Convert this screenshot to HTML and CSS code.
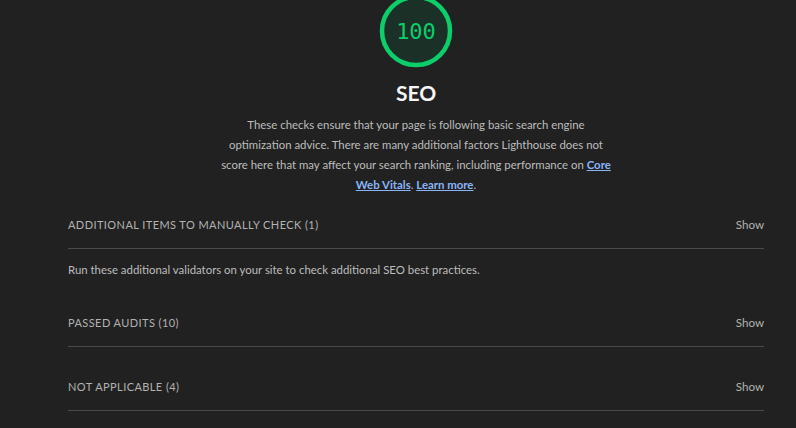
FILE: index.html
```html
<!DOCTYPE html>
<html>
<head>
<meta charset="utf-8">
<link rel="stylesheet" href="styles.css">
</head>
<body>
<div class="category">
  <div class="gauge-wrap">
    <svg class="gauge" width="80" height="80" viewBox="0 0 80 80">
      <circle cx="40" cy="40" r="34" fill="#1b3027" stroke="#0cce6b" stroke-width="4.5"/>
    </svg>
    <span class="gauge-score">100</span>
  </div>
  <div class="title">SEO</div>
  <p class="desc">These checks ensure that your page is following basic search engine optimization advice. There are many additional factors Lighthouse does not score here that may affect your search ranking, including performance on <a href="#">Core Web Vitals</a>. <a href="#">Learn more</a>.</p>

  <div class="group">
    <div class="group-header"><span class="group-title">Additional items to manually check (1)</span><span class="show">Show</span></div>
    <p class="group-desc">Run these additional validators on your site to check additional SEO best practices.</p>
  </div>
  <div class="group">
    <div class="group-header"><span class="group-title">Passed audits (10)</span><span class="show">Show</span></div>
  </div>
  <div class="group">
    <div class="group-header"><span class="group-title">Not applicable (4)</span><span class="show">Show</span></div>
  </div>
</div>
</body>
</html>
```
FILE: styles.css
```css
html, body {
  margin: 0;
  background: #212121;
  font-family: Lato, "Open Sans", sans-serif;
  color: #bdbdbd;
  overflow: hidden;
}
.category {
  padding: 0 32px 0 68px;
}
.gauge-wrap {
  position: relative;
  width: 80px;
  height: 80px;
  margin: -9px auto 0;
}
.gauge {
  display: block;
}
.gauge-score {
  position: absolute;
  left: 0;
  right: 0;
  top: 29px;
  text-align: center;
  font-family: "DejaVu Sans Mono", "Liberation Mono", monospace;
  font-size: 22px;
  line-height: 24px;
  color: #0cce6b;
}
.title {
  text-align: center;
  color: #f5f5f5;
  font-size: 21px;
  font-weight: 700;
  line-height: 28px;
  margin-top: 8px;
}
.desc {
  width: 400px;
  margin: 8px auto 6px;
  text-align: center;
  font-size: 11.4px;
  line-height: 20px;
  color: #bdbdbd;
}
.desc a {
  color: #8ab4f8;
  font-weight: 700;
}
.group-header {
  display: flex;
  justify-content: space-between;
  align-items: center;
  height: 47px;
  border-bottom: 1px solid #4a4a4a;
}
.group + .group {
  margin-top: 16px;
}
.group-title {
  text-transform: uppercase;
  font-size: 11px;
  letter-spacing: 0.42px;
  color: #b2b2b2;
}
.show {
  font-size: 11.6px;
  color: #b2b2b2;
}
.group-desc {
  margin: 11px 0 19px;
  font-size: 11.4px;
  line-height: 20px;
  color: #bdbdbd;
}
```
